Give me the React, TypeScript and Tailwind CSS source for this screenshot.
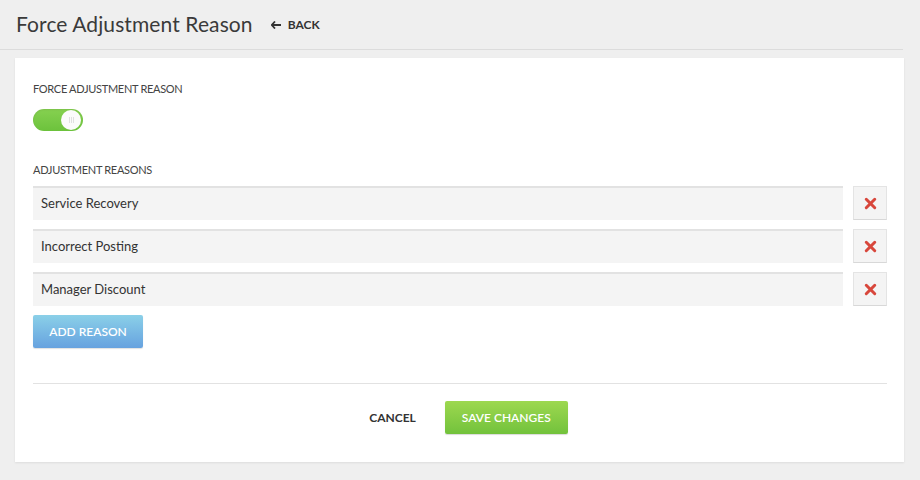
import { X } from 'lucide-react';

const reasons = ['Service Recovery', 'Incorrect Posting', 'Manager Discount'];

function Toggle() {
  return (
    <div className="w-[50px] h-[22px] rounded-full bg-gradient-to-b from-[#86d150] to-[#6cc23c] shadow-[inset_0_1px_2px_rgba(0,0,0,0.08)] flex items-center justify-end pr-[2px]">
      <div className="w-[20px] h-[20px] rounded-full bg-[#fbfbfb] flex items-center justify-center gap-[1px]">
        <span className="w-px h-[6px] bg-[#e0e0e0]" />
        <span className="w-px h-[6px] bg-[#e0e0e0]" />
        <span className="w-px h-[6px] bg-[#e0e0e0]" />
      </div>
    </div>
  );
}

export default function App() {
  return (
    <div className="w-[920px] h-[480px] bg-[#efefef] font-['Lato','Open_Sans',sans-serif] text-[#333] overflow-hidden">
      <div className="h-[50px] mr-[17px] border-b border-[#dcdcdc] flex items-center pl-[16px]">
        <h1 className="text-[21px] text-[#3a3a3a] tracking-[0.1px] -mt-[1px]">Force Adjustment Reason</h1>
        <button className="ml-[18px] flex items-center text-[12px] font-bold text-[#333]">
          <svg width="10" height="8" viewBox="0 0 10 8" className="mr-[7px]">
            <path d="M4 0.5 L0.8 4 L4 7.5 M1 4 H10" stroke="#333" strokeWidth="1.8" fill="none" />
          </svg>
          BACK
        </button>
      </div>

      <div className="mt-[8px] ml-[15px] w-[889px] h-[404px] bg-white shadow-[0_1px_2px_rgba(0,0,0,0.08)] pl-[18px] pr-[17px] pt-[23px]">
        <div className="text-[11px] leading-[16px] text-[#444] uppercase tracking-[-0.3px]">Force Adjustment Reason</div>
        <div className="mt-[12px]">
          <Toggle />
        </div>

        <div className="mt-[31px] text-[11px] leading-[16px] text-[#444] uppercase tracking-[-0.3px]">Adjustment Reasons</div>
        <div className="mt-[8px] flex flex-col gap-[9px]">
          {reasons.map((r) => (
            <div key={r} className="flex gap-[10px]">
              <div className="flex-1 h-[34px] bg-[#f4f4f4] border-t-2 border-[#e2e2e2] flex items-center pl-[8px] text-[13px] text-[#333]">
                {r}
              </div>
              <button className="w-[34px] h-[34px] bg-[#f4f4f4] border border-[#e4e4e4] border-b-[#d8d8d8] flex items-center justify-center">
                <X size={17} strokeWidth={4.2} className="text-[#d8473c]" />
              </button>
            </div>
          ))}
        </div>

        <button className="mt-[9px] w-[110px] h-[33px] rounded-[2px] bg-gradient-to-b from-[#8bd0e8] to-[#67a2df] text-white text-[12px] font-semibold shadow-[0_1px_1px_rgba(0,0,0,0.12)]">
          ADD REASON
        </button>

        <div className="mt-[35px] border-t border-[#e2e2e2]" />

        <div className="mt-[17px] flex items-center justify-center gap-[29px] pl-[17px]">
          <button className="text-[12px] font-bold text-[#333]">CANCEL</button>
          <button className="w-[123px] h-[33px] rounded-[2px] bg-gradient-to-b from-[#9dd84f] to-[#72c23c] text-white text-[12px] font-semibold shadow-[0_1px_1px_rgba(0,0,0,0.15)]">
            SAVE CHANGES
          </button>
        </div>
      </div>
    </div>
  );
}
